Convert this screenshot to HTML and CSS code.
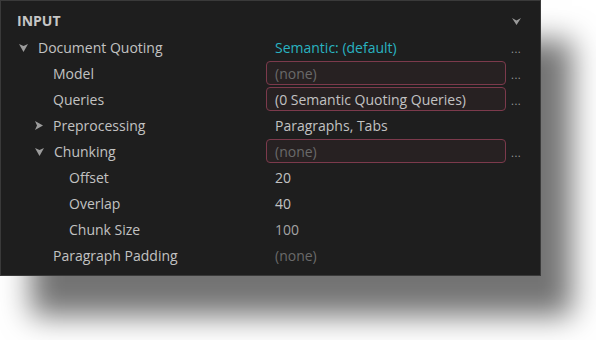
FILE: index.html
```html
<!DOCTYPE html>
<html>
	<head>
		<meta charset="UTF-8">
		<title>Input</title>
		<link rel="stylesheet" href="styles.css">
	</head>
	<body>
		<div class="panel">
			<div class="head">
				<span class="title">INPUT</span>
				<svg class="collapse" width="9" height="7" viewBox="0 0 9 7"><path d="M0 0 L4.5 2.5 L9 0 L4.5 7 Z" fill="#9a9a9a"/></svg>
			</div>
			<div class="rows">
				<div class="label lv1"><svg class="arrow" width="9" height="8" viewBox="0 0 9 8"><path d="M0 0 L4.5 2 L9 0 L4.5 8 Z"/></svg>Document Quoting</div>
				<div class="value link">Semantic: (default)</div>
				<div class="more">...</div>

				<div class="label lv2">Model</div>
				<div class="value"><span class="box empty">(none)</span></div>
				<div class="more">...</div>

				<div class="label lv2">Queries</div>
				<div class="value"><span class="box">(0 Semantic Quoting Queries)</span></div>
				<div class="more">...</div>

				<div class="label lv1b"><svg class="arrow side" width="8" height="9" viewBox="0 0 8 9"><path d="M0 0 L8 4.5 L0 9 L2 4.5 Z"/></svg>Preprocessing</div>
				<div class="value">Paragraphs, Tabs</div>
				<div class="more"></div>

				<div class="label lv1b"><svg class="arrow" width="9" height="8" viewBox="0 0 9 8"><path d="M0 0 L4.5 2 L9 0 L4.5 8 Z"/></svg>Chunking</div>
				<div class="value"><span class="box empty">(none)</span></div>
				<div class="more">...</div>

				<div class="label lv3">Offset</div>
				<div class="value">20</div>
				<div class="more"></div>

				<div class="label lv3">Overlap</div>
				<div class="value">40</div>
				<div class="more"></div>

				<div class="label lv3">Chunk Size</div>
				<div class="value dim">100</div>
				<div class="more"></div>

				<div class="label lv2">Paragraph Padding</div>
				<div class="value empty">(none)</div>
				<div class="more"></div>
			</div>
		</div>
	</body>
</html>
```
FILE: styles.css
```css
*{ margin: 0; padding: 0; box-sizing: border-box;}
html{ height: 100%;}
body{ height: 340px; background: #fff; font-family: "Open Sans", "Noto Sans", sans-serif; font-size: 14px;}
.panel{ width: 541px; height: 276px; background: #1e1e1e; border: 1px solid #3a3a3a; box-shadow: 31px 40px 28px rgba(0,0,0,0.55); color: #c2c2c2;}
.head{ height: 33px; display: flex; align-items: center; justify-content: space-between; padding: 6px 19px 0 16px;}
.title{ font-weight: bold; color: #c6c6c6;}
.collapse{ margin-top: 1px;}
.rows{ display: grid; grid-template-columns: 265px 240px 34px; grid-auto-rows: 26px;}
.label{ display: flex; align-items: center; white-space: nowrap;}
.lv1{ padding-left: 18px;}
.lv1b{ padding-left: 34px;}
.lv2{ padding-left: 52px;}
.lv3{ padding-left: 68px;}
.arrow{ fill: #9c9c9c; margin-right: 10px; margin-top: 1px;}
.arrow.side{ margin-right: 10px;}
.value{ display: flex; align-items: center; padding-left: 9px; white-space: nowrap;}
.value.link{ color: #29b3c1;}
.value.dim{ color: #a4a4a4;}
.empty{ color: #6a6a6a;}
.value:has(.box){ padding-left: 0;}
.box{ display: flex; align-items: center; width: 240px; height: 24px; padding-left: 8px; border: 1px solid #7c3a4c; border-radius: 4px; background: #272122;}
.box.empty{ color: #6a6a6a;}
.more{ color: #9a9a9a; font-size: 11px; padding: 7px 0 0 5px; letter-spacing: 0.5px;}
```
